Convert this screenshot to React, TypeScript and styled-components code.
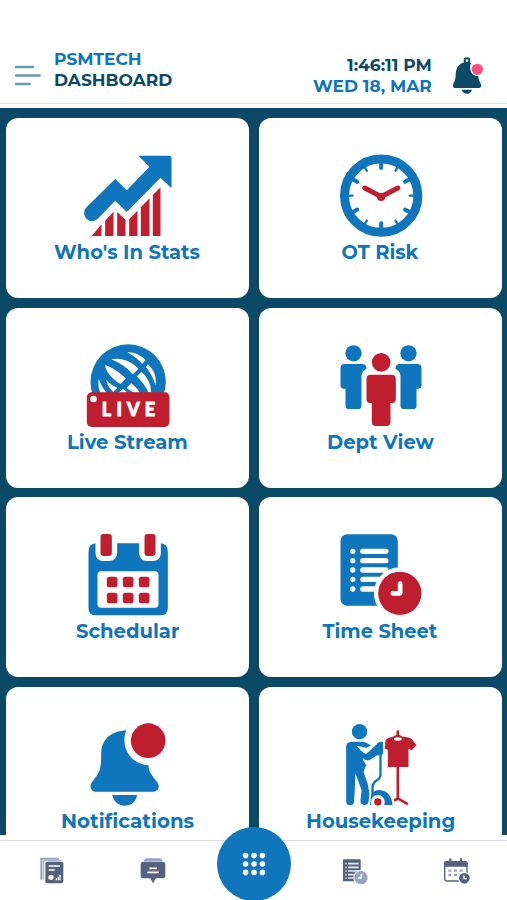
import React, { useLayoutEffect, useRef, useState } from "react";
import styled, { createGlobalStyle } from "styled-components";

const BLUE = "#0f75bc";
const RED = "#be1e2d";
const NAVY = "#0b4a67";
const SLATE = "#55617f";
const MIST = "#97a4c3";

const GlobalStyle = createGlobalStyle`
  * { box-sizing: border-box; }
  body {
    margin: 0;
    background: #fff;
    font-family: "Montserrat", "Inter", "Liberation Sans", sans-serif;
    overflow: hidden;
  }
`;

const Screen = styled.div`
  display: flex;
  flex-direction: column;
  width: 507px;
  height: 900px;
  background: #fff;
  overflow: hidden;
`;

const Header = styled.header`
  display: flex;
  align-items: flex-start;
  height: 104px;
  padding: 48px 23px 0 15px;
  border-bottom: 1.5px solid #dfe2e5;
`;

const MenuButton = styled.button`
  width: 26px;
  height: 22px;
  margin: 17px 13px 0 0;
  padding: 0;
  border: 0;
  background: none;
  svg { display: block; }
`;

const HeaderText = styled.div<{ $end?: boolean }>`
  display: flex;
  flex-direction: column;
  align-items: ${(p) => (p.$end ? "flex-end" : "flex-start")};
  margin-left: ${(p) => (p.$end ? "auto" : "0")};
  margin-top: ${(p) => (p.$end ? "7px" : "1px")};
`;

const BellButton = styled.button`
  width: 32px;
  height: 39px;
  margin: 8px 0 0 20px;
  padding: 0;
  border: 0;
  background: none;
  svg { display: block; }
`;

const FitBox = styled.span<{ $size: number; $line: number; $color: string; $weight: number }>`
  display: block;
  height: ${(p) => p.$line}px;
  line-height: ${(p) => p.$line}px;
  font-size: ${(p) => p.$size}px;
  font-weight: ${(p) => p.$weight};
  color: ${(p) => p.$color};
  text-align: left;
  white-space: nowrap;
`;

const FitInner = styled.span`
  display: inline-block;
  transform-origin: 0 50%;
`;

interface FitProps {
  width: number;
  size: number;
  line: number;
  color: string;
  weight?: number;
  children: string;
}

/* Stretches a single line of text to a fixed width. */
function FitText({ width, size, line, color, weight = 700, children }: FitProps) {
  const ref = useRef<HTMLSpanElement>(null);
  const [scale, setScale] = useState(1);
  useLayoutEffect(() => {
    if (ref.current) setScale(width / ref.current.offsetWidth);
  }, [width, children]);
  return (
    <FitBox $size={size} $line={line} $color={color} $weight={weight} style={{ width }}>
      <FitInner ref={ref} style={{ transform: `scaleX(${scale})` }}>{children}</FitInner>
    </FitBox>
  );
}

const Board = styled.main`
  display: grid;
  grid-template-columns: 243px 243px;
  grid-auto-rows: 180px;
  gap: 9.65px 10px;
  height: 727px;
  flex: none;
  margin-top: 4px;
  padding: 10px 5px 0 6px;
  background: ${NAVY};
  overflow: hidden;
`;

const Card = styled.button`
  display: flex;
  flex-direction: column;
  align-items: center;
  padding: 33px 1px 0 0;
  border: 0;
  border-radius: 12px;
  background: #fff;
  font-family: inherit;
`;

const CardIcon = styled.svg`
  display: block;
  flex: none;
  width: 90px;
  height: 90px;
  margin-left: 1px;
`;

const NavBar = styled.nav`
  display: grid;
  grid-template-columns: repeat(5, 1fr);
  justify-items: center;
  height: 60px;
  flex: none;
  margin-top: 5px;
  padding-left: 1px;
  border-top: 1px solid #d9dbde;
  background: #fff;
`;

const NavItem = styled.button`
  width: 28px;
  height: 28px;
  margin-top: 15px;
  padding: 0;
  border: 0;
  background: none;
  svg { display: block; }
`;

const AppsButton = styled.button`
  position: relative;
  z-index: 1;
  display: grid;
  place-items: center;
  width: 74px;
  height: 74px;
  margin-top: -14.5px;
  padding: 0;
  border: 0;
  border-radius: 50%;
  background: ${BLUE};
`;

const StatsIcon = () => (
  <CardIcon viewBox="127.5 33 270 270">
    <path fill={BLUE} d="M294 47H386Q393 47 393 54V145L360 113L259 216L224 182L172 236C154 252 131 239 131 219Q131 209 138 202L224 117L259 151L327 80Z" />
    <g fill={RED}>
      <path d="M154 288L183 253V288Z" />
      <path d="M194 242L219 215V288H194Z" />
      <path d="M230 216L255 239V288H230Z" />
      <path d="M266 238L291 212V288H266Z" />
      <path d="M301 202L327 175V288H301Z" />
      <path d="M337 165L360 142V288H337Z" />
    </g>
  </CardIcon>
);

const ClockIcon = () => (
  <CardIcon viewBox="106.5 33 270 270">
    <circle cx="242" cy="167" r="110" fill="none" stroke={BLUE} strokeWidth="27" />
    <g stroke={BLUE} strokeLinecap="round">
      {[0, 60, 120, 180, 240, 300].map((a) => (
        <path key={a} strokeWidth="12" d="M242 68V84" transform={`rotate(${a} 242 167)`} />
      ))}
      {[30, 90, 150, 210, 270, 330].map((a) => (
        <path key={a} strokeWidth="7" d="M242 68V81" transform={`rotate(${a} 242 167)`} />
      ))}
    </g>
    <path d="M193 144L242 170L292 144" fill="none" stroke={RED} strokeWidth="15" strokeLinecap="round" />
    <circle cx="242" cy="171" r="12" fill={RED} />
  </CardIcon>
);

const LiveIcon = () => (
  <CardIcon viewBox="97.5 33 270 270">
    <circle cx="233" cy="156" r="113" fill={BLUE} />
    <g fill="#fff">
      <path d="M182 88C212 82 239 92 264 116L247 133C230 113 207 98 182 88Z" />
      <path d="M230 67C252 66 269 75 285 90L275 102C263 88 248 76 230 67Z" />
      <path d="M292 103C310 119 319 139 315 166C309 144 298 125 286 111Z" />
      <path d="M163 104C187 113 207 126 226 146L210 162C186 148 168 129 163 104Z" />
      <path d="M273 125C292 143 302 164 302 187H294C286 169 273 153 259 139Z" />
      <path d="M145 147C150 163 158 176 168 188H150C144 174 142 161 145 147Z" />
      <path d="M167 151C178 161 188 168 201 173L188 186C178 177 170 165 167 151Z" />
      <path d="M217 176L232 188H205Z" />
      <path d="M242 160C253 169 262 177 268 188H249L228 174Z" />
    </g>
    <rect x="109" y="187" width="248" height="104" rx="15" fill={RED} />
    <circle cx="129" cy="207" r="10" fill="#fff" />
    <text x="154" y="258" textLength="160" lengthAdjust="spacing" fontFamily="Lato, sans-serif" fontWeight="900" fontSize="54" fill="#fff" stroke="#fff" strokeWidth="2.5">LIVE</text>
  </CardIcon>
);

const PeopleIcon = () => (
  <CardIcon viewBox="106.5 33 270 270">
    <g fill={BLUE}>
      <circle cx="159" cy="70" r="24.5" />
      <path d="M132 102H186Q199 103 198 117Q184 123 183 139V227Q183 237 172 237H146Q135 237 135 227V176H128Q120 176 120 166V114Q120 102 132 102Z" />
      <circle cx="324" cy="70" r="24.5" />
      <path d="M351 102H297Q284 103 285 117Q299 123 300 139V227Q300 237 311 237H337Q348 237 348 227V176H355Q363 176 363 166V114Q363 102 351 102Z" />
    </g>
    <g fill={RED}>
      <circle cx="242" cy="97" r="28" />
      <path d="M211 134H273Q286 134 286 147V207Q286 219 275 219H270V276Q270 288 258 288H226Q214 288 214 276V219H209Q198 219 198 207V147Q198 134 211 134Z" />
    </g>
  </CardIcon>
);

const CalendarIcon = () => (
  <CardIcon viewBox="97.5 31 270 270">
    <path fill={BLUE} d="M135 71V101Q136 124 158 124H174Q199 124 200 99V71H266V99Q267 124 290 124H307Q330 124 331 101V71Q352 73 352 96V264Q352 287 329 287H137Q114 287 114 264V96Q114 73 135 71Z" />
    <rect x="141" y="155" width="183" height="109" rx="11" fill="#fff" />
    <g fill={RED}>
      <rect x="150" y="43" width="34" height="66" rx="9" />
      <rect x="282" y="43" width="33" height="66" rx="9" />
      {[171, 219].map((y) =>
        [169, 217, 265].map((x) => <rect key={`${x}-${y}`} x={x} y={y} width="32" height="32" rx="8" />)
      )}
    </g>
  </CardIcon>
);

const TimeSheetIcon = () => (
  <CardIcon viewBox="106.5 31 270 270">
    <rect x="120" y="44" width="172" height="214" rx="20" fill={BLUE} />
    {[95, 123, 151, 179, 208].map((y) => (
      <g key={y} fill="#fff">
        <circle cx="157" cy={y} r="8" />
        <rect x="179" y={y - 8} width="85" height="16" rx="8" />
      </g>
    ))}
    <circle cx="298" cy="221" r="78" fill="#fff" />
    <circle cx="298" cy="221" r="65" fill={RED} />
    <path d="M299 192V221H277" fill="none" stroke="#fff" strokeWidth="14" strokeLinecap="round" strokeLinejoin="round" />
  </CardIcon>
);

const AlertIcon = () => (
  <CardIcon viewBox="97.5 30 270 270">
    <path fill={BLUE} d="M228 61C180 63 152 90 152 132C152 179 147 187 129 211C113 227 120 245 139 245H307C325 245 330 227 318 214C301 193 294 183 294 166C248 162 218 126 222 82Q223 71 228 61Z" />
    <path fill={BLUE} d="M185 255H260C252 298 194 298 185 255Z" />
    <circle cx="293" cy="92" r="52" fill={RED} />
  </CardIcon>
);

const HousekeepingIcon = () => (
  <CardIcon viewBox="106.5 30 270 270">
    <g fill={BLUE}>
      <circle cx="177" cy="65" r="23" />
      <path d="M152 95H185Q200 96 211 107L197 113Q185 110 168 107Q184 127 197 132L229 103Q228 97 241 95Q248 92 248 100V128Q247 136 237 136H230L207 150Q198 154 186 144Q191 160 198 165Q193 174 189 185L201 220L207 250L204 276Q201 286 190 285Q179 284 180 272L183 240L165 190L161 274Q160 286 149 286Q137 286 137 274V109Q138 96 152 95Z" />
    </g>
    <path d="M240 130V190Q241 205 229 211Q217 216 216 235V260" fill="none" stroke={BLUE} strokeWidth="7" />
    <path d="M211 260Q214 240 237 240Q272 243 276 285H209Z" fill={BLUE} />
    <circle cx="232" cy="276" r="21" fill="#fff" />
    <circle cx="232" cy="276" r="11" fill={RED} />
    <path d="M208 287H255V304H208Z" fill="#fff" />
    <path d="M292 79V65" stroke={RED} strokeWidth="8" strokeLinecap="round" />
    <path d="M277 80L292 72L307 80Q327 80 334 88L348 105L334 121L324 116V171H262V119L253 116L255 90Q264 81 277 80Z" fill={RED} />
    <ellipse cx="292" cy="87" rx="12" ry="5.5" fill="#fff" />
    <path d="M292 169V265M284 270L292 265L319 281" fill="none" stroke={RED} strokeWidth="8" strokeLinejoin="round" strokeLinecap="round" />
  </CardIcon>
);

const cards = [
  { label: "Who's In Stats", width: 146, Icon: StatsIcon },
  { label: "OT Risk", width: 77, Icon: ClockIcon },
  { label: "Live Stream", width: 121, Icon: LiveIcon },
  { label: "Dept View", width: 107, Icon: PeopleIcon },
  { label: "Schedular", width: 103, Icon: CalendarIcon },
  { label: "Time Sheet", width: 115, Icon: TimeSheetIcon },
  { label: "Notifications", width: 133, Icon: AlertIcon },
  { label: "Housekeeping", width: 149, Icon: HousekeepingIcon },
];

export default function App() {
  return (
    <>
      <GlobalStyle />
      <Screen>
        <Header>
          <MenuButton aria-label="Menu">
            <svg width="26" height="22" viewBox="0 0 26 22" stroke="#6398af" strokeWidth="2.7" strokeLinecap="round">
              <path d="M1.2 2H18M1.2 10.5H24.5M1.2 19H14.5" />
            </svg>
          </MenuButton>
          <HeaderText>
            <FitText width={87} size={17} line={21} color={BLUE}>PSMTECH</FitText>
            <FitText width={118} size={17} line={21} color={NAVY}>DASHBOARD</FitText>
          </HeaderText>
          <HeaderText $end>
            <FitText width={85} size={17} line={21} color={NAVY}>1:46:11 PM</FitText>
            <FitText width={119} size={17} line={21} color={BLUE}>WED 18, MAR</FitText>
          </HeaderText>
          <BellButton aria-label="Alerts">
            <svg width="32" height="39" viewBox="597 48 96 117">
              <circle cx="642" cy="62" r="7" fill="none" stroke={NAVY} strokeWidth="6" />
              <path fill={NAVY} d="M642 66C620 67 608 82 608 105C608 120 603 126 600 134Q598 144 609 144H676Q687 144 684 133C680 124 676 120 676 108C660 110 645 92 654 68Z" />
              <path fill={NAVY} d="M626 149H657Q653 161 642 161Q630 161 626 149Z" />
              <circle cx="673" cy="88" r="17" fill="#ff4f81" />
            </svg>
          </BellButton>
        </Header>
        <Board>
          {cards.map(({ label, width, Icon }) => (
            <Card key={label}>
              <Icon />
              <FitText width={width} size={19.4} line={22} color={BLUE}>{label}</FitText>
            </Card>
          ))}
        </Board>
        <NavBar>
          <NavItem aria-label="Reports">
            <svg width="28" height="28" viewBox="114 107 84 84">
              <path d="M124 178V115H177" fill="none" stroke={MIST} strokeWidth="6" />
              <path d="M130 178V121H184" fill="none" stroke={MIST} strokeWidth="3" />
              <rect x="136" y="124" width="54" height="65" rx="6" fill={SLATE} />
              <path d="M146 137H180M146 149H164" stroke="#fff" strokeWidth="5" />
              <circle cx="153" cy="171" r="8" fill="#fff" />
              <path d="M169 180V174M175 180V169M180 180V163" stroke="#fff" strokeWidth="4" />
            </svg>
          </NavItem>
          <NavItem aria-label="Messages">
            <svg width="28" height="28" viewBox="416 107 84 84">
              <path d="M438 114H478Q485 114 488 123H430Q432 114 438 114Z" fill={MIST} />
              <path d="M430 124H486Q495 124 495 133V166Q495 174 486 174H467L458 189L450 174H430Q421 174 421 166V133Q421 124 430 124Z" fill={SLATE} />
              <path d="M447 144H470M441 156H476" stroke="#fff" strokeWidth="5" />
            </svg>
          </NavItem>
          <AppsButton aria-label="Apps">
            <svg width="26" height="26" viewBox="0 0 26 26" fill="#fff">
              {[4.6, 13, 21.4].map((y) =>
                [4.6, 13, 21.4].map((x) => <circle key={`${x}-${y}`} cx={x} cy={y} r="2.8" />)
              )}
            </svg>
          </AppsButton>
          <NavItem aria-label="Time sheet">
            <svg width="28" height="28" viewBox="266 107 84 84">
              <rect x="272" y="117" width="53" height="66" rx="2" fill={SLATE} />
              <path d="M279 130H283M287 130H319M279 141H283M287 141H319M279 152H283M287 152H319M279 163H283M287 163H312M279 173H283M287 173H304" stroke="#e6e9f2" strokeWidth="5" />
              <circle cx="326" cy="172" r="23" fill="#fff" />
              <circle cx="326" cy="172" r="20" fill={MIST} />
              <path d="M327 161V173H317" fill="none" stroke="#fff" strokeWidth="4" />
            </svg>
          </NavItem>
          <NavItem aria-label="Calendar">
            <svg width="28" height="28" viewBox="568 107 84 84">
              <rect x="576" y="125" width="67" height="57" rx="7" fill="#fff" stroke={SLATE} strokeWidth="4" />
              <path d="M574 139V129Q574 122 582 122H637Q645 122 645 129V139Z" fill={SLATE} />
              <path d="M593 117V128M625 117V128" stroke={SLATE} strokeWidth="7" strokeLinecap="round" />
              <path d="M587 151H596M604 151H613M621 151H630M587 164H596M604 164H613" stroke={MIST} strokeWidth="7" />
              <circle cx="635" cy="174" r="19" fill="#fff" />
              <circle cx="635" cy="174" r="16" fill={SLATE} />
              <path d="M634 165V175H642" fill="none" stroke="#fff" strokeWidth="4" />
            </svg>
          </NavItem>
        </NavBar>
      </Screen>
    </>
  );
}
